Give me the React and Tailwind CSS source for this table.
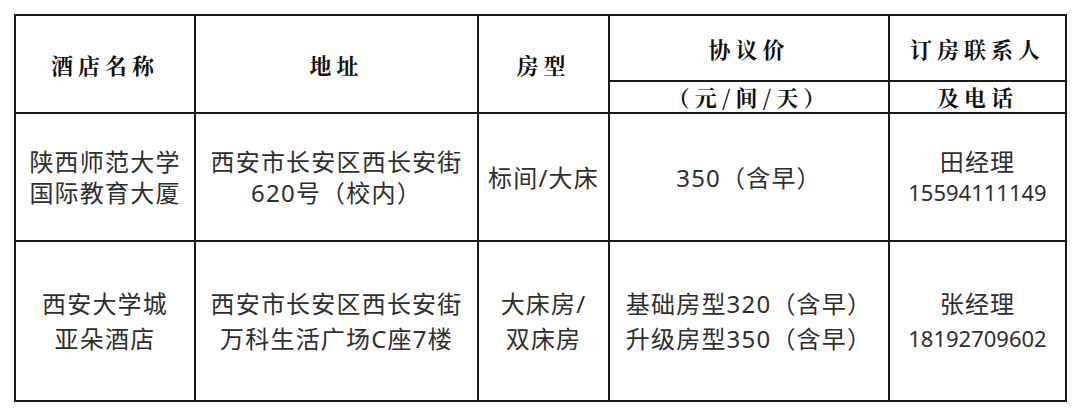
import React from "react";

const headFont = {
  fontFamily: '"Noto Serif CJK SC", "Noto Sans CJK SC", serif',
};
const bodyFont = {
  fontFamily: '"Noto Sans", "Noto Sans CJK SC", sans-serif',
};

const rows = [
  {
    name: ["陕西师范大学", "国际教育大厦"],
    addr: ["西安市长安区西长安街", "620号（校内）"],
    type: ["标间/大床"],
    price: ["350（含早）"],
    contact: ["田经理", "15594111149"],
    h: "h-[128px]",
    lead: "leading-[31px]",
  },
  {
    name: ["西安大学城", "亚朵酒店"],
    addr: ["西安市长安区西长安街", "万科生活广场C座7楼"],
    type: ["大床房/", "双床房"],
    price: ["基础房型320（含早）", "升级房型350（含早）"],
    contact: ["张经理", "18192709602"],
    h: "h-[160px]",
    lead: "leading-[35px]",
  },
];

const Lines = ({ items }) => items.map((t, i) => <div key={i}>{t}</div>);

export default function App() {
  const th = "border-2 border-[#1a1a1a] text-center align-middle font-bold text-[22px] tracking-[5px] text-[#111]";
  const td = "border-2 border-[#1a1a1a] text-center align-middle text-[24px] tracking-[1.2px] text-[#2e2e2e]";

  return (
    <div className="w-[1080px] h-[416px] bg-white pt-[14px] pl-[14px]">
      <table className="table-fixed border-collapse w-[1051px]">
        <colgroup>
          <col className="w-[180px]" />
          <col className="w-[283px]" />
          <col className="w-[131px]" />
          <col className="w-[280px]" />
          <col className="w-[177px]" />
        </colgroup>
        <thead style={headFont}>
          <tr className="h-[66px]">
            <th rowSpan={2} className={th}>酒店名称</th>
            <th rowSpan={2} className={th}>地址</th>
            <th rowSpan={2} className={th}>房型</th>
            <th className={th}>协议价</th>
            <th className={th}>订房联系人</th>
          </tr>
          <tr className="h-[32px]">
            <th className={th + " leading-[28px]"}>（元/间/天）</th>
            <th className={th + " leading-[28px]"}>及电话</th>
          </tr>
        </thead>
        <tbody style={bodyFont}>
          {rows.map((r, i) => (
            <tr key={i} className={r.h}>
              <td className={td + " " + r.lead}><Lines items={r.name} /></td>
              <td className={td + " " + r.lead}><Lines items={r.addr} /></td>
              <td className={td + " " + r.lead}><Lines items={r.type} /></td>
              <td className={td + " " + r.lead}><Lines items={r.price} /></td>
              <td className={td + " " + r.lead}>
                <div>{r.contact[0]}</div>
                <div className="text-[22px] tracking-normal">{r.contact[1]}</div>
              </td>
            </tr>
          ))}
        </tbody>
      </table>
    </div>
  );
}
